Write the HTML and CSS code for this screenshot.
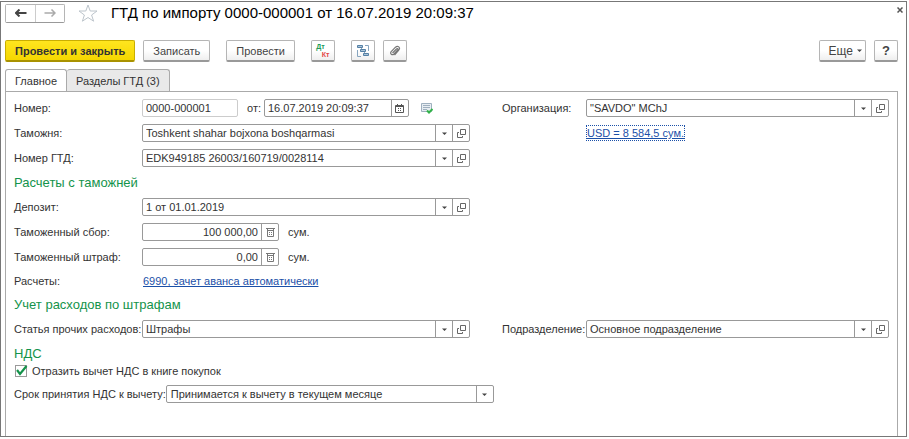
FILE: index.html
```html
<!DOCTYPE html>
<html lang="ru">
<head>
<meta charset="utf-8">
<meta name="viewport" content="width=device-width, initial-scale=1">
<title>ГТД по импорту 0000-000001 от 16.07.2019 20:09:37</title>
<link rel="stylesheet" href="styles.css">
</head>
<body>
<svg width="0" height="0" class="sprite" aria-hidden="true">
  <symbol id="open" viewBox="0 0 9 9"><path d="M3.500 .5h5v5h-5zM2 3.500H.5v5h5V7" fill="none" stroke="#666"/></symbol>
  <symbol id="down" viewBox="0 0 9 9"><path d="M2 3.500h5L4.500 6z" fill="#444"/></symbol>
  <symbol id="calc" viewBox="0 0 9 9"><path d="M0 .5h9M1.500 0v8.500h6V0M2 2.500h5" fill="none" stroke="#777"/><path d="M3 4h1v1H3zM5 4h1v1H5zM3 6h1v1H3zM5 6h1v1H5z" fill="#777"/></symbol>
  <symbol id="cal" viewBox="0 0 9 9"><path d="M.5 1.500h8v7h-8z" fill="none" stroke="#555"/><path d="M1 1h7v2H1zM2 0h1v1H2zM6 0h1v1H6zM3 4h1v1H3zM5 4h1v1H5zM3 6h1v1H3zM5 6h1v1H5z" fill="#555"/></symbol>
</svg>
<main class="window">
  <header class="titlebar">
    <div class="nav">
      <button type="button" aria-label="Назад"><svg width="12" height="8" viewBox="0 0 12 8"><path d="M4.500 .5L1 4l3.500 3.500M1 4h10.500" fill="none" stroke="#444" stroke-width="2"/></svg></button>
      <button type="button" aria-label="Вперед"><svg width="12" height="8" viewBox="0 0 12 8"><path d="M7.500 .5L11 4 7.500 7.500M11 4H.5" fill="none" stroke="#aaa" stroke-width="1.500"/></svg></button>
    </div>
    <button type="button" class="plain" aria-label="В избранное"><svg width="20" height="18" viewBox="0 0 20 18"><path d="M10 1l2.200 6H19l-5.400 4 2 6.200L10 13.500l-5.600 3.700 2-6.200L1 7h6.800z" fill="none" stroke="#bcc4cb"/></svg></button>
    <h1>ГТД по импорту 0000-000001 от 16.07.2019 20:09:37</h1>
    <button type="button" class="plain close" aria-label="Закрыть"><svg width="6" height="6" viewBox="0 0 6 6"><path d="M.5 .5l5 5M5.500 .5l-5 5" fill="none" stroke="#555" stroke-width="1.500"/></svg></button>
  </header>

  <div class="commands">
    <button type="button" class="btn primary">Провести и закрыть</button>
    <button type="button" class="btn">Записать</button>
    <button type="button" class="btn spaced">Провести</button>
    <button type="button" class="btn icon spaced dtkt" aria-label="Проводки"><span class="dt">Дт</span><span class="kt">Кт</span></button>
    <button type="button" class="btn icon spaced" aria-label="Структура подчиненности"><svg width="12" height="12" viewBox="0 0 12 12"><path d="M.5 .5h5v2h-5zM3.500 4.500h5v2h-5zM6.500 8.500h5v2h-5z" fill="#a9c3d8" stroke="#5580a5"/><path d="M8 .5h3.500V6M4 11.500H.5V5M4.500 3v1M7.500 7v1" fill="none" stroke="#87a5bf"/></svg></button>
    <button type="button" class="btn icon" aria-label="Присоединенные файлы"><svg width="12" height="12" viewBox="0 0 12 12"><path d="M3.500 8L7.500 4c1-1 2 0 1 1.200L5 9C3.200 10.700.5 8.800 2.200 6.700L6.500 2.200C8.800 0 11.800 2.500 9.800 5L5.500 10" fill="none" stroke="#777" stroke-width="1.200"/></svg></button>
    <button type="button" class="btn more">Еще<svg width="9" height="9"><use href="#down"/></svg></button>
    <button type="button" class="btn icon help">?</button>
  </div>

  <div class="tabs" role="tablist">
    <button type="button" role="tab" aria-selected="true" class="tab active">Главное</button>
    <button type="button" role="tab" aria-selected="false" class="tab">Разделы ГТД (3)</button>
  </div>

  <form class="panel">
    <div class="row">
      <div class="left">
        <label class="name" for="num">Номер:</label>
        <div class="field num"><input id="num" value="0000-000001" readonly></div>
        <label class="from" for="date">от:</label>
        <div class="field date"><input id="date" value="16.07.2019 20:09:37"><button type="button" aria-label="Календарь"><svg width="9" height="9"><use href="#cal"/></svg></button></div>
        <svg class="status" width="12" height="12" viewBox="0 0 12 12"><path d="M.5 1.500h10v8H.5z" fill="#e7edf2" stroke="#9fb0bf"/><path d="M2 3.500h7M2 5.500h7M2 7.500h4" stroke="#9fb0bf"/><path d="M6 8.500l2 2L11.500 7" fill="none" stroke="#32b24a" stroke-width="2"/></svg>
      </div>
      <div class="right">
        <label class="name2" for="org">Организация:</label>
        <div class="field grow"><input id="org" value="&quot;SAVDO&quot; MChJ"><button type="button" aria-label="Выбрать"><svg width="9" height="9"><use href="#down"/></svg></button><button type="button" aria-label="Открыть"><svg width="9" height="9"><use href="#open"/></svg></button></div>
      </div>
    </div>
    <div class="row">
      <div class="left">
        <label class="name" for="customs">Таможня:</label>
        <div class="field grow"><input id="customs" value="Toshkent shahar bojxona boshqarmasi"><button type="button" aria-label="Выбрать"><svg width="9" height="9"><use href="#down"/></svg></button><button type="button" aria-label="Открыть"><svg width="9" height="9"><use href="#open"/></svg></button></div>
      </div>
      <div class="right"><a href="#" class="rate">USD = 8 584,5 сум.</a></div>
    </div>
    <div class="row">
      <div class="left">
        <label class="name" for="gtd">Номер ГТД:</label>
        <div class="field grow"><input id="gtd" value="EDK949185 26003/160719/0028114"><button type="button" aria-label="Выбрать"><svg width="9" height="9"><use href="#down"/></svg></button><button type="button" aria-label="Открыть"><svg width="9" height="9"><use href="#open"/></svg></button></div>
      </div>
    </div>
    <h2>Расчеты с таможней</h2>
    <div class="row">
      <div class="left">
        <label class="name" for="dep">Депозит:</label>
        <div class="field grow"><input id="dep" value="1 от 01.01.2019"><button type="button" aria-label="Выбрать"><svg width="9" height="9"><use href="#down"/></svg></button><button type="button" aria-label="Открыть"><svg width="9" height="9"><use href="#open"/></svg></button></div>
      </div>
    </div>
    <div class="row">
      <div class="left">
        <label class="name" for="fee">Таможенный сбор:</label>
        <div class="field sum"><input id="fee" value="100 000,00"><button type="button" aria-label="Калькулятор"><svg width="9" height="9"><use href="#calc"/></svg></button></div>
        <span class="unit">сум.</span>
      </div>
    </div>
    <div class="row">
      <div class="left">
        <label class="name" for="fine">Таможенный штраф:</label>
        <div class="field sum"><input id="fine" value="0,00"><button type="button" aria-label="Калькулятор"><svg width="9" height="9"><use href="#calc"/></svg></button></div>
        <span class="unit">сум.</span>
      </div>
    </div>
    <div class="row short">
      <div class="left"><span class="name">Расчеты:</span><a href="#" class="account">6990, зачет аванса автоматически</a></div>
    </div>
    <h2>Учет расходов по штрафам</h2>
    <div class="row">
      <div class="left">
        <label class="name" for="item">Статья прочих расходов:</label>
        <div class="field grow"><input id="item" value="Штрафы"><button type="button" aria-label="Выбрать"><svg width="9" height="9"><use href="#down"/></svg></button><button type="button" aria-label="Открыть"><svg width="9" height="9"><use href="#open"/></svg></button></div>
      </div>
      <div class="right">
        <label class="name2" for="dept">Подразделение:</label>
        <div class="field grow"><input id="dept" value="Основное подразделение"><button type="button" aria-label="Выбрать"><svg width="9" height="9"><use href="#down"/></svg></button><button type="button" aria-label="Открыть"><svg width="9" height="9"><use href="#open"/></svg></button></div>
      </div>
    </div>
    <h2 class="tight">НДС</h2>
    <label class="check"><input type="checkbox" checked><svg class="tick" width="13" height="12" viewBox="0 0 13 12"><path d="M2 5l3 4L11.500 1" fill="none" stroke="#14934b" stroke-width="2.200"/></svg>Отразить вычет НДС в книге покупок</label>
    <div class="period">
      <label class="term" for="term">Срок принятия НДС к вычету:</label>
      <div class="field select">
        <select id="term"><option>Принимается к вычету в текущем месяце</option></select>
        <span class="arrow"><svg width="9" height="9"><use href="#down"/></svg></span>
      </div>
    </div>
  </form>
</main>
</body>
</html>
```
FILE: styles.css
```css
* { box-sizing: border-box; }

body {
  margin: 0;
  padding: 1px 2px 2px 0;
  min-height: 100vh;
  display: flex;
  background: #fff;
  color: #333;
  font: 11px/14px "Liberation Sans", Arial, sans-serif;
}

button, input, select { font: inherit; color: inherit; margin: 0; }
button { display: flex; align-items: center; justify-content: center; padding: 0; }
svg { display: block; flex: none; }
.sprite { position: absolute; }

.window {
  flex: 1;
  min-width: 0;
  display: flex;
  flex-direction: column;
  border: 1px solid #777;
}

.titlebar { display: flex; align-items: center; height: 22px; padding: 0 3px 0 4px; }
.nav {
  display: flex;
  border: 1px solid #b5b5b5;
  border-bottom-color: #999;
  border-radius: 2px;
}
.nav button { width: 29px; height: 17px; border: 0; background: #fff; }
.nav button + button { border-left: 1px solid #ccc; }
.plain { border: 0; background: none; }
.titlebar .plain { margin-left: 13px; }
.titlebar h1 {
  flex: 1;
  margin: 0 0 0 13px;
  color: #000;
  font-size: 15px;
  line-height: 20px;
  font-weight: 400;
  white-space: nowrap;
}
.titlebar .close { align-self: flex-start; padding-top: 5px; }

.commands { display: flex; gap: 8px; padding: 16px 8px 0 4px; }
.btn {
  height: 22px;
  padding: 0 9px;
  border: 1px solid #b5b5b5;
  border-bottom: 2px solid #999;
  border-radius: 2px;
  background: linear-gradient(#fff 50%, #efefef);
  color: #444;
  white-space: nowrap;
}
.primary {
  border-color: #c9ae00;
  border-bottom-color: #a99200;
  background: linear-gradient(#ffe51f, #f5d700);
  color: #333;
  font-weight: 700;
}
.icon { width: 24px; padding: 0; }
.spaced { margin-left: 8px; }
.dtkt { flex-direction: column; font-size: 7px; line-height: 8px; font-weight: 700; }
.dt { margin-right: 5px; color: #209c58; }
.kt { margin-left: 5px; color: #e34545; }
.more { margin-left: auto; gap: 2px; padding: 0 1px 0 9px; font-size: 12px; }
.help { font-size: 13px; font-weight: 700; }

.tabs { display: flex; padding: 7px 8px 0 4px; }
.tab {
  height: 22px;
  padding: 0 9px;
  border: 1px solid #aaa;
  border-bottom: 0;
  border-radius: 3px 3px 0 0;
  background: #e9e9e9;
}
.tab + .tab { border-left: 0; }
.tab.active { background: #fff; }

.panel {
  flex: 1;
  display: flex;
  flex-direction: column;
  gap: 7px;
  margin: 0 8px 0 4px;
  padding: 7px 8px 0;
  border: 1px solid #aaa;
  border-bottom: 0;
}
.row { display: grid; grid-template-columns: 456px 1fr; column-gap: 32px; min-height: 18px; }
.short { min-height: 16px; }
.left, .right { display: flex; align-items: center; min-width: 0; }
.name { flex: 0 0 128px; white-space: nowrap; }
.name2 { flex: 0 0 84px; white-space: nowrap; }
.field {
  display: flex;
  height: 18px;
  border: 1px solid #999;
  border-radius: 2px;
  background: #fff;
}
.grow { flex: 1; min-width: 0; }
.field input {
  flex: 1;
  min-width: 0;
  padding: 0 3px;
  border: 0;
  background: none;
  outline: 0;
}
.field button { width: 17px; border: 0; border-left: 1px solid #999; background: none; }
.num { width: 96px; border-color: #ccc; }
.from { margin: 0 3px 0 9px; }
.date { width: 145px; }
.sum { width: 137px; }
.sum input { text-align: right; }
.status { margin-left: 12px; }
.unit { margin-left: 9px; }

a { color: #1b50a8; text-decoration: underline; }
.rate { margin-left: 85px; outline: 1px dotted #1b50a8; }
.account { margin-left: 1px; }

h2 {
  margin: 0;
  color: #14934b;
  font-size: 13px;
  line-height: 17px;
  font-weight: 400;
}
.tight { margin-bottom: -5px; }

.check { position: relative; display: flex; align-items: center; gap: 5px; padding-left: 1px; }
.check input {
  appearance: none;
  width: 12px;
  height: 12px;
  border: 1px solid #999;
}
.tick { position: absolute; left: 1px; top: 1px; pointer-events: none; }
.check input:not(:checked) + .tick { display: none; }

.period { display: flex; align-items: center; }
.term { flex: 0 0 151px; white-space: nowrap; }
.select { position: relative; flex: 0 1 328px; }
.select select {
  flex: 1;
  min-width: 0;
  padding: 0 20px 0 4px;
  border: 0;
  background: none;
  outline: 0;
  appearance: none;
}
.arrow {
  position: absolute;
  inset: 0 0 0 auto;
  display: flex;
  align-items: center;
  justify-content: center;
  width: 17px;
  border-left: 1px solid #999;
  pointer-events: none;
}
```
